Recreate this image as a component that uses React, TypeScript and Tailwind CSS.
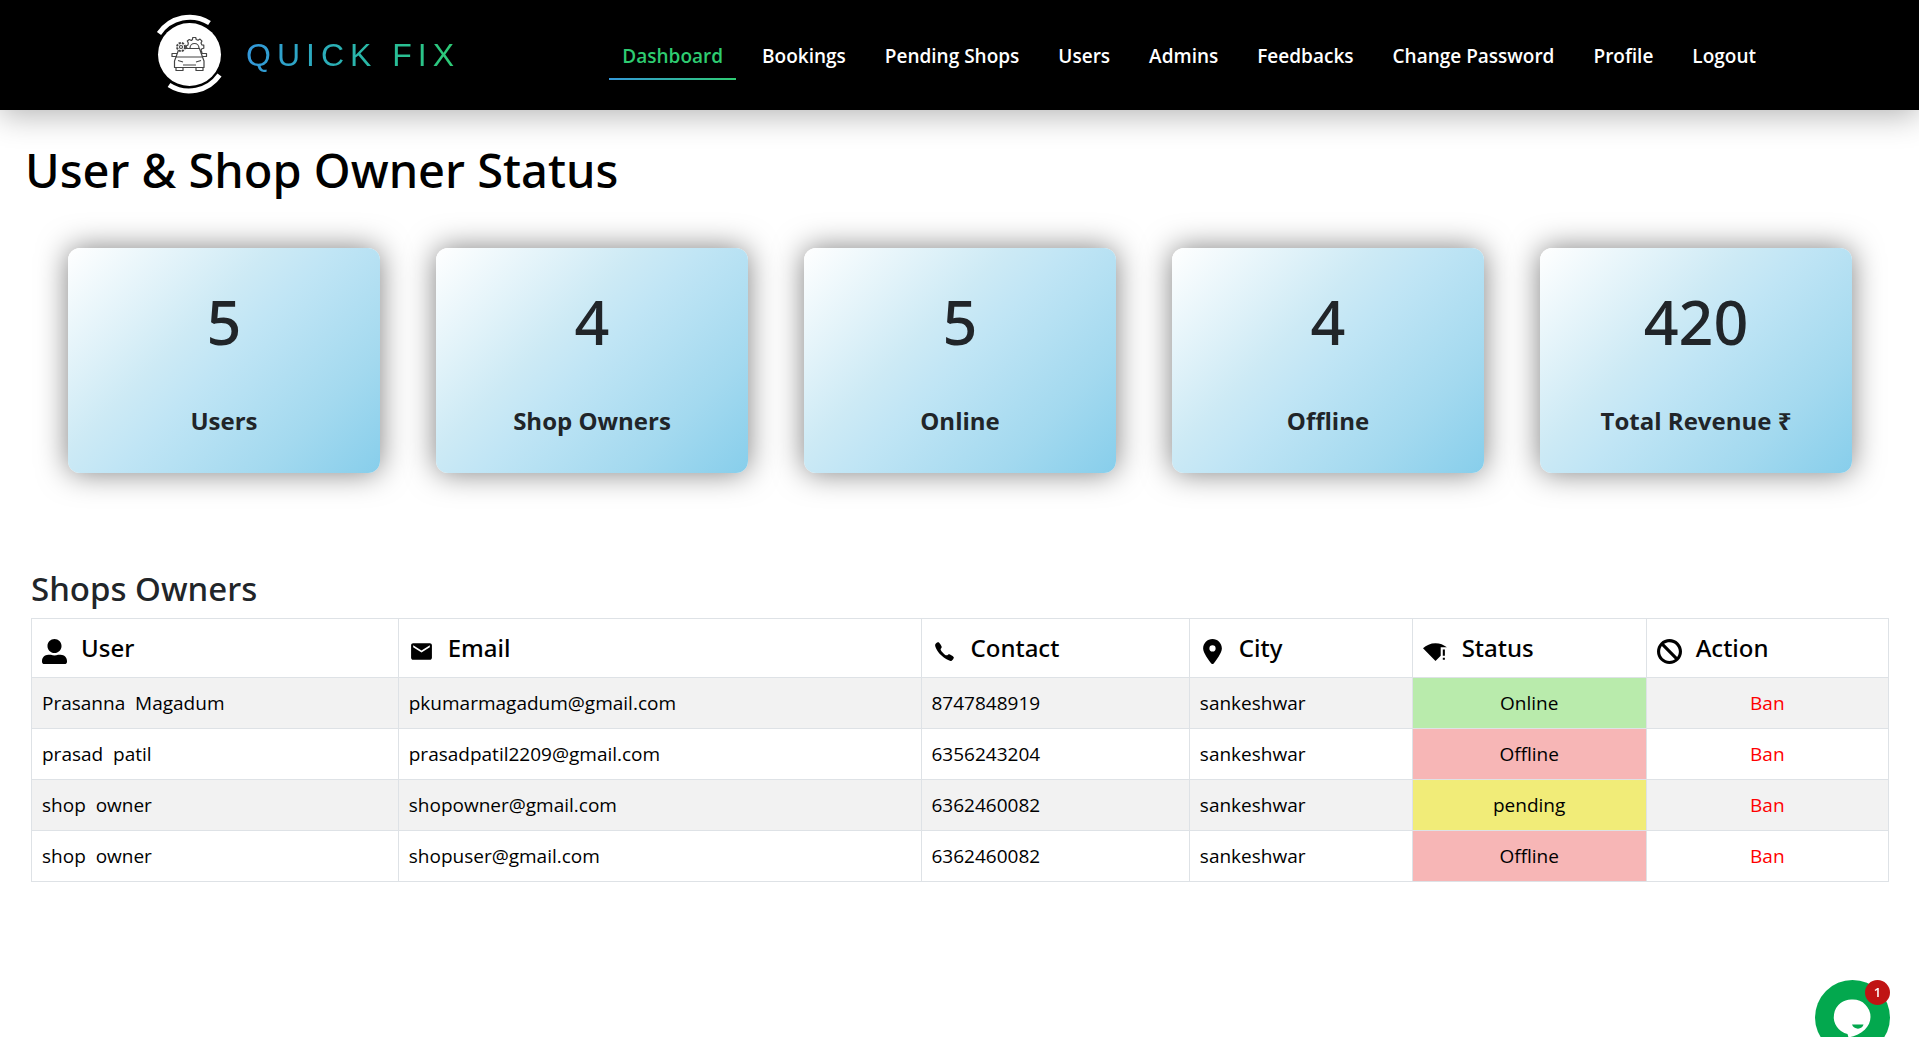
import { FaUserAlt } from "react-icons/fa";
import { FaLocationDot } from "react-icons/fa6";
import { MdEmail } from "react-icons/md";
import { IoIosCall } from "react-icons/io";
import { ImBlocked } from "react-icons/im";
import type { ComponentType } from "react";

const links = ["Dashboard", "Bookings", "Pending Shops", "Users", "Admins", "Feedbacks", "Change Password", "Profile", "Logout"];

const stats = [
  { value: "5", label: "Users" },
  { value: "4", label: "Shop Owners" },
  { value: "5", label: "Online" },
  { value: "4", label: "Offline" },
  { value: "420", label: "Total Revenue ₹" },
];

function WifiAlert({ className }: { className?: string }) {
  return (
    <svg viewBox="0 0 24 24" fill="currentColor" className={className} aria-hidden="true">
      <path d="M22.920 8C19.970 5.510 16.160 4 12 4 7.310 4 3.070 5.900 0 8.980L12 21l5-5.010V8h5.920zM19 18h2v2h-2v-2zm0-8h2v6h-2v-6z" />
    </svg>
  );
}

const columns: { label: string; Icon: ComponentType<{ className?: string }>; width: string }[] = [
  { label: "User", Icon: FaUserAlt, width: "w-[19.75%]" },
  { label: "Email", Icon: MdEmail, width: "w-[28.15%]" },
  { label: "Contact", Icon: IoIosCall, width: "w-[14.45%]" },
  { label: "City", Icon: FaLocationDot, width: "w-[12%]" },
  { label: "Status", Icon: WifiAlert, width: "w-[12.6%]" },
  { label: "Action", Icon: ImBlocked, width: "w-[13.05%]" },
];

const statusColor: Record<string, string> = {
  Online: "bg-[#b9ebac]",
  Offline: "bg-[#f7b6b6]",
  pending: "bg-[#f1ec78]",
};

const owners = [
  { first: "Prasanna", last: "Magadum", email: "pkumarmagadum@gmail.com", contact: "8747848919", city: "sankeshwar", status: "Online" },
  { first: "prasad", last: "patil", email: "prasadpatil2209@gmail.com", contact: "6356243204", city: "sankeshwar", status: "Offline" },
  { first: "shop", last: "owner", email: "shopowner@gmail.com", contact: "6362460082", city: "sankeshwar", status: "pending" },
  { first: "shop", last: "owner", email: "shopuser@gmail.com", contact: "6362460082", city: "sankeshwar", status: "Offline" },
];

function Logo() {
  return (
    <svg viewBox="0 -5 80 110" className="h-[110px] w-20 shrink-0" fill="none" aria-hidden="true">
      <circle cx="39.5" cy="49.5" r="31.5" fill="#fff" />
      <g stroke="#fff" strokeWidth="5">
        <path d="M9 28.500A37 37 0 0 1 59.500 18" />
        <path d="M19 80A37 37 0 0 0 69.500 70" />
      </g>
      <g stroke="#444" strokeWidth="1.2" strokeLinejoin="round">
        <path d="M37 43l-1-2 2-1 .3-2-1-2 2-1.500 2 1 1.200-1 .2-2h3l.5 2 1.800.8 2-1.200 2 2-1 2 .8 1.700 2 .4v3l-2 .6-.8 1.800 1 1.800-1 1.100" fill="#fff" />
        <path d="M40 43a4.500 4.500 0 0 1 9 0" />
        <path d="M29 43.500h20.500l3 8.500h-26.500zM26 52h26.500l1.500 4v6.500h-29.500v-6.500zM26 62.500v3h7v-3M46 62.500v3h7v-3M27 48.500h-5v3h4M51.500 48.500h5v3h-4" />
        <path d="M28 55.500l5 1.500M51 55.500l-5 1.500M33 60h13" />
        <circle cx="31" cy="42" r="4" fill="#fff" strokeWidth="2" strokeDasharray="2.200 1" />
        <circle cx="31" cy="42" r="1.500" />
      </g>
    </svg>
  );
}

export default function App() {
  return (
    <div className="relative min-h-screen overflow-hidden bg-white font-['Open_Sans','Noto_Sans',sans-serif] text-[#212529]">
      <header className="flex h-[110px] items-center justify-between bg-black px-[150px] shadow-[0_5px_30px_rgba(0,0,0,0.3)]">
        <a href="#home" className="flex items-center gap-4">
          <Logo />
          <span className="bg-gradient-to-r from-[#3498db] to-[#2ecc71] bg-clip-text font-['Liberation_Sans',sans-serif] text-[32px] tracking-[6px] text-transparent">
            QUICK FIX
          </span>
        </a>
        <nav className="flex items-center gap-[13px]">
          {links.map((link, i) => (
            <a
              key={link}
              href={"#" + link.toLowerCase().replace(" ", "-")}
              className={
                i === 0
                  ? "border-b-2 px-[13px] pt-3 pb-2 text-[19px] leading-7 font-semibold whitespace-nowrap text-[#2ecc71] [border-image:linear-gradient(to_right,#3498db,#2ecc71)_1]"
                  : "border-b-2 border-transparent px-[13px] pt-3 pb-2 text-[19px] leading-7 font-semibold whitespace-nowrap text-white"
              }
            >
              {link}
            </a>
          ))}
        </nav>
      </header>

      <main>
        <h1 className="px-[25px] pt-[30px] font-['Noto_Sans',sans-serif] text-[47px] leading-[60px] font-medium text-black">User &amp; Shop Owner Status</h1>

        <section className="mt-12 grid grid-cols-5 gap-14 pr-[67px] pl-[68px]">
          {stats.map(({ value, label }) => (
            <div
              key={label}
              className="flex h-[225px] flex-col items-center justify-between rounded-xl bg-[linear-gradient(135deg,#fff_0%,#cdeaf5_38%,#c0e5f5_50%,#a3d9ef_78%,#87ceeb_100%)] pt-[38px] pb-8 shadow-[0_0_30px_rgba(0,0,0,0.5)]"
            >
              <p className="font-['Noto_Sans',sans-serif] text-[61px] leading-[72px] font-medium">{value}</p>
              <p className="text-2xl leading-10 font-bold">{label}</p>
            </div>
          ))}
        </section>

        <section className="mt-[94px] pr-[30px] pl-[31px]">
          <h2 className="mb-2 font-['Noto_Sans',sans-serif] text-[33px] leading-[43px] font-medium">Shops Owners</h2>
          <table className="w-full table-fixed border-collapse text-[19px] leading-[30px] text-black">
            <thead>
              <tr>
                {columns.map(({ label, Icon, width }) => (
                  <th key={label} scope="col" className={width + " h-[59px] border border-[#dee2e6] px-[10px] text-left font-['Noto_Sans',sans-serif] text-2xl font-medium"}>
                    <span className="flex items-center gap-[14px]">
                      <Icon className="mt-1.5 size-[25px]" />
                      {label}
                    </span>
                  </th>
                ))}
              </tr>
            </thead>
            <tbody>
              {owners.map((o) => (
                <tr key={o.email} className="h-[51px] odd:bg-[#f2f2f2]">
                  <td className="border border-[#dee2e6] px-[10px] whitespace-pre">{o.first + "  " + o.last}</td>
                  <td className="border border-[#dee2e6] px-[10px]">{o.email}</td>
                  <td className="border border-[#dee2e6] px-[10px]">{o.contact}</td>
                  <td className="border border-[#dee2e6] px-[10px]">{o.city}</td>
                  <td className={statusColor[o.status] + " border border-[#dee2e6] px-[10px] text-center"}>{o.status}</td>
                  <td className="border border-[#dee2e6] px-[10px] text-center">
                    <button type="button" className="text-[#f00]">Ban</button>
                  </td>
                </tr>
              ))}
            </tbody>
          </table>
        </section>
      </main>

      <button type="button" aria-label="Open chat, 1 unread message" className="fixed right-[29px] -bottom-[18px] size-[75px] rounded-full bg-[#03a84e]">
        <svg viewBox="0 0 75 75" className="size-full" aria-hidden="true">
          <path d="M38 19.500a17.500 17.500 0 0 1 17.500 17.500c0 9-8 18-22 20.500l-1-3.500A17.500 17.500 0 0 1 38 19.500z" fill="#fff" />
          <path d="M37 44.500h11.500c-1 5.500-10 5.500-11.500 0z" fill="#03a84e" />
        </svg>
        <span className="absolute top-0 right-0 flex size-[25px] items-center justify-center rounded-full bg-[#c01414] text-[13px] font-semibold text-white">1</span>
      </button>
    </div>
  );
}
